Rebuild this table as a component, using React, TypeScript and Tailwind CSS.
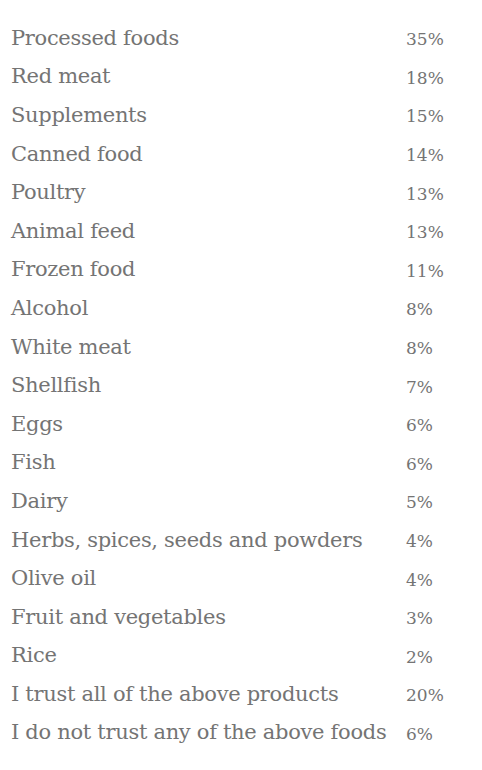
import React from "react";

const rows: [string, string][] = [
  ["Processed foods", "35%"],
  ["Red meat", "18%"],
  ["Supplements", "15%"],
  ["Canned food", "14%"],
  ["Poultry", "13%"],
  ["Animal feed", "13%"],
  ["Frozen food", "11%"],
  ["Alcohol", "8%"],
  ["White meat", "8%"],
  ["Shellfish", "7%"],
  ["Eggs", "6%"],
  ["Fish", "6%"],
  ["Dairy", "5%"],
  ["Herbs, spices, seeds and powders", "4%"],
  ["Olive oil", "4%"],
  ["Fruit and vegetables", "3%"],
  ["Rice", "2%"],
  ["I trust all of the above products", "20%"],
  ["I do not trust any of the above foods", "6%"],
];

export default function App() {
  return (
    <div className="w-[482px] h-[770px] bg-white pt-[19px] pl-[11px] text-[#747474]" style={{ fontFamily: '"DejaVu Serif", serif' }}>
      {rows.map(([label, pct]) => (
        <div key={label} className="grid grid-cols-[395px_1fr] h-[38.6px] items-center">
          <span className="text-[21px] leading-none tracking-[-0.3px]">{label}</span>
          <span className="text-[17px] leading-none pt-[3px]">{pct}</span>
        </div>
      ))}
    </div>
  );
}
